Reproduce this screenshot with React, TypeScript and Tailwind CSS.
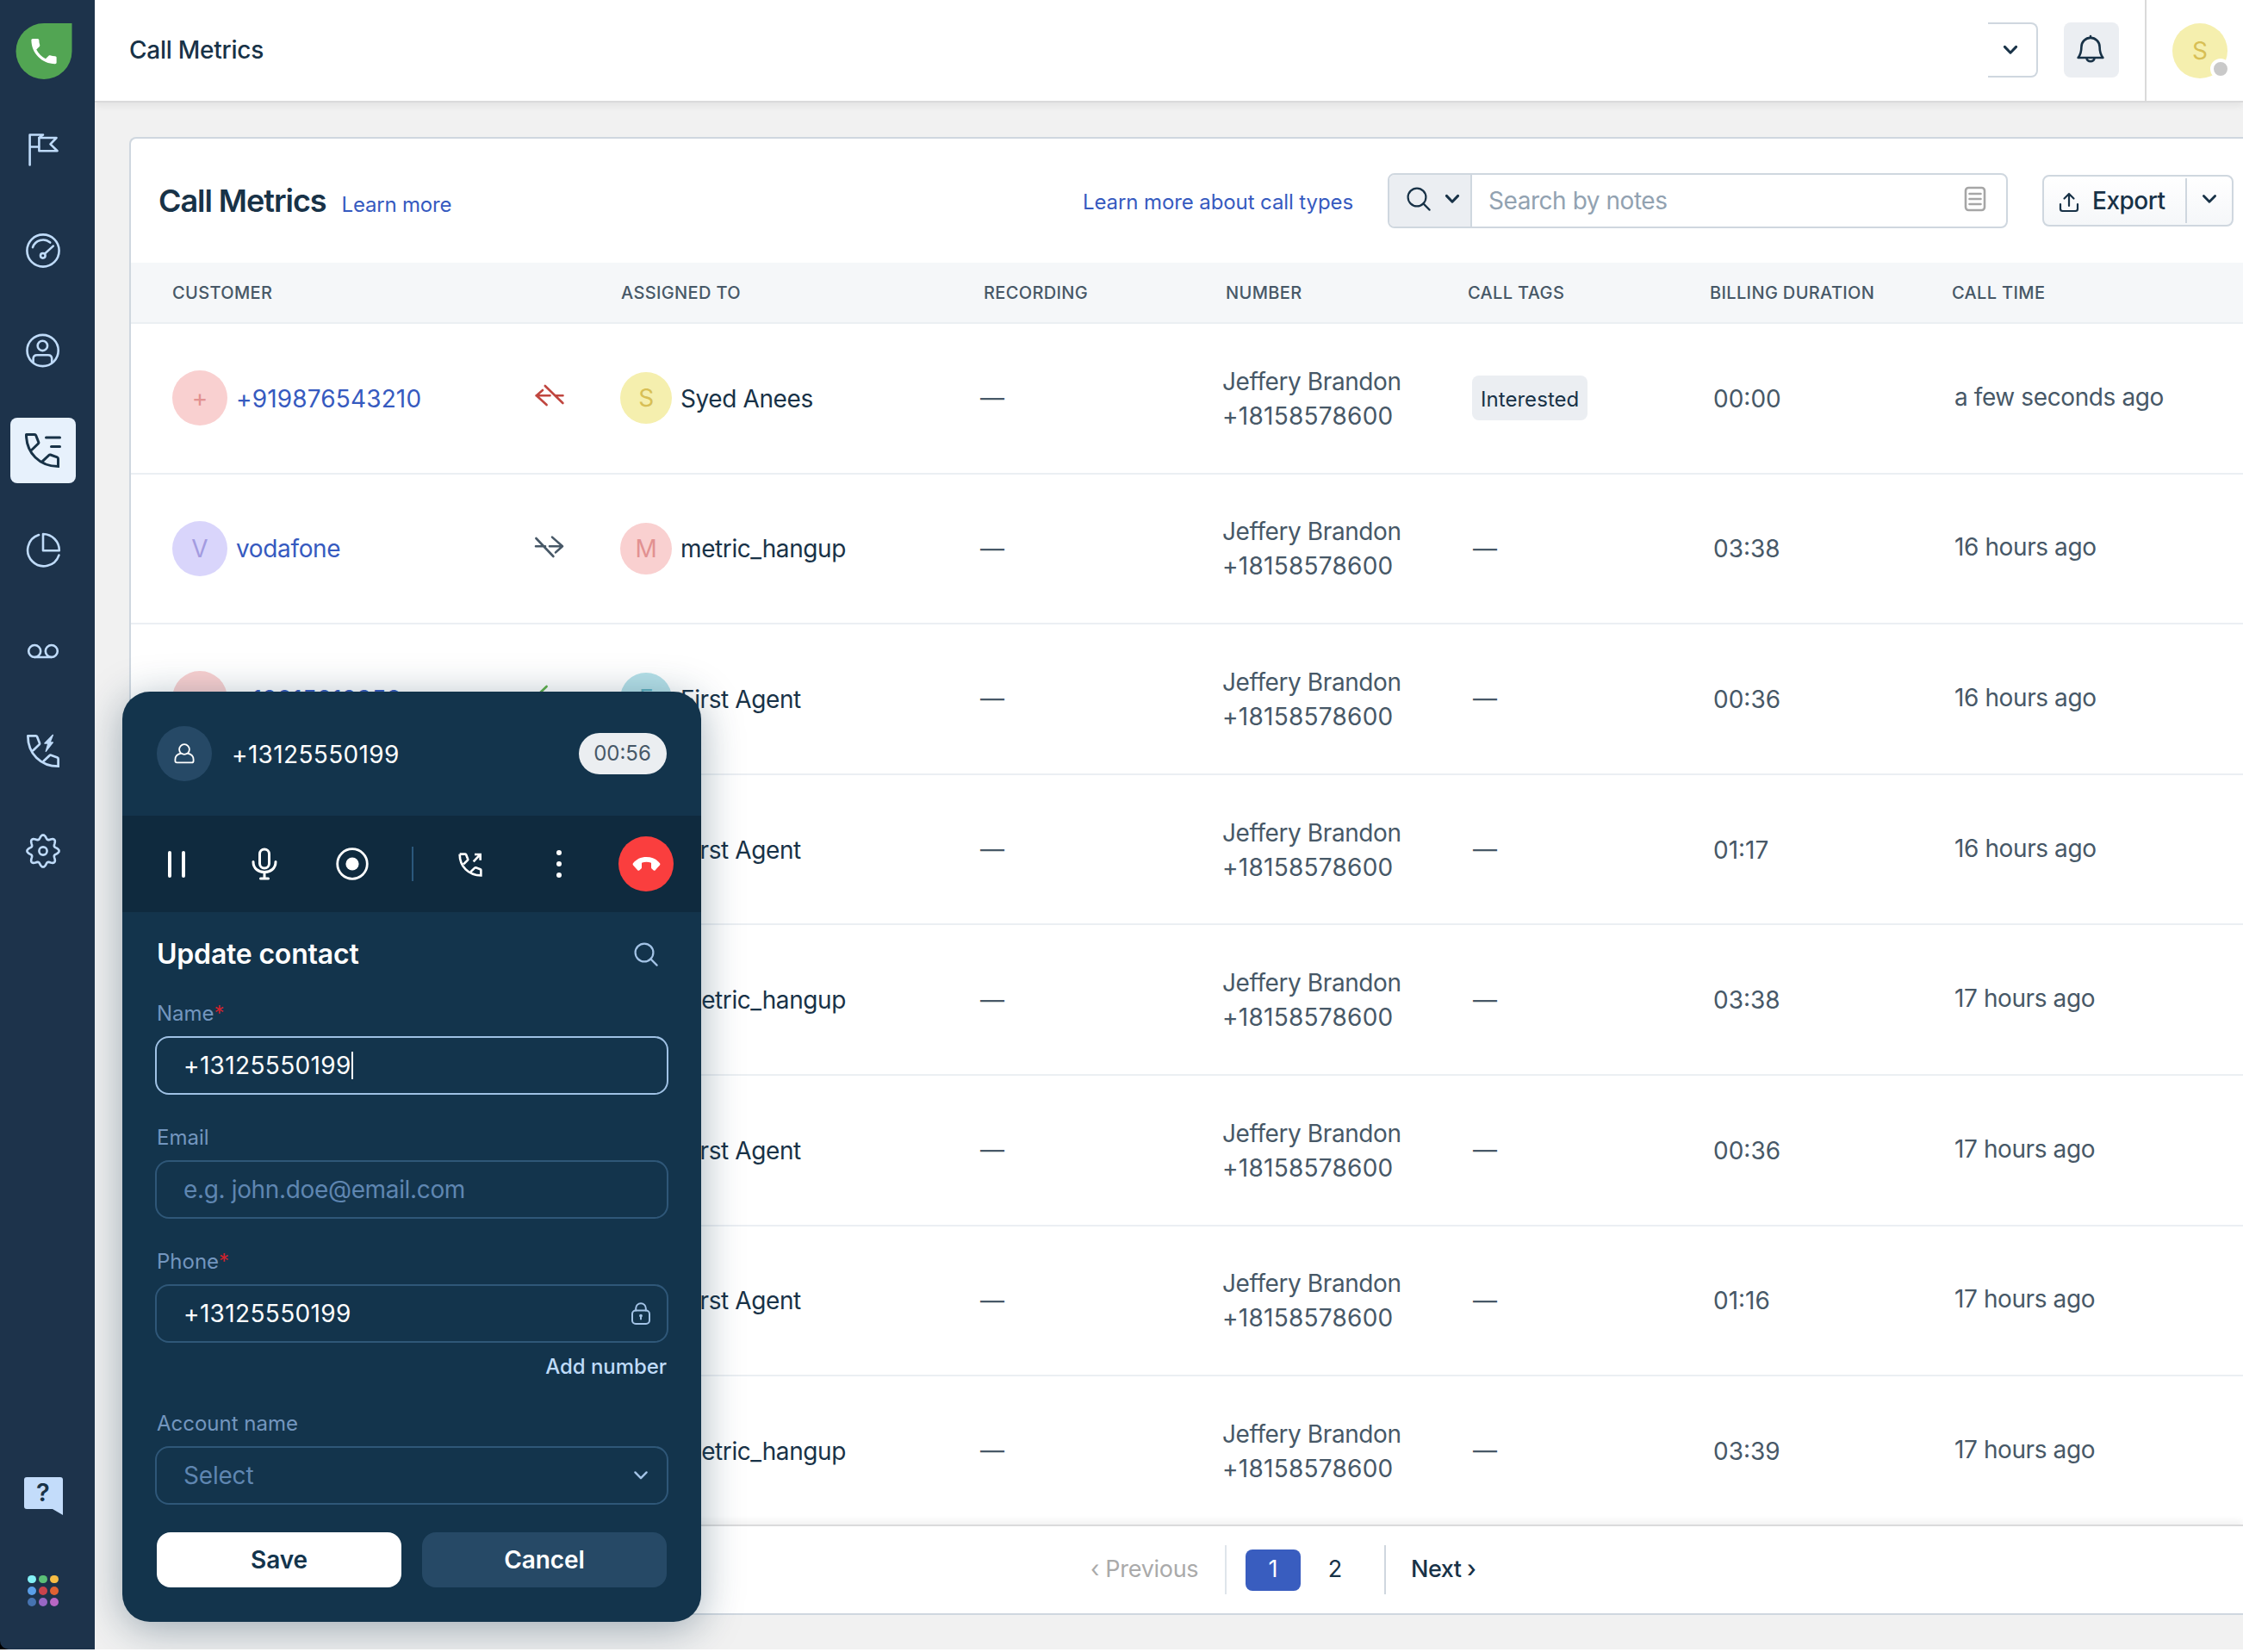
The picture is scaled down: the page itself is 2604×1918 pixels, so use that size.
import type { ReactNode } from "react";
import clsx from "clsx";

type Direction = "missed-in" | "missed-out" | "in";

interface Call {
  customer?: string;
  initial?: string;
  customerColor?: string;
  direction: Direction;
  agent: string;
  agentInitial?: string;
  agentColor: string;
  tag?: string;
  duration: string;
  time: string;
}

const PINK = "bg-[#f9d0d0] text-[#e29191]";
const YELLOW = "bg-[#f5efae] text-[#d8bf55]";
const PURPLE = "bg-[#d9d5fb] text-[#a39be0]";
const TEAL = "bg-[#b5e0e8] text-[#5fb0bf]";

const METRIC = { agent: "metric_hangup", agentColor: PINK };
const FIRST = { agent: "First Agent", agentColor: TEAL };

const calls: Call[] = [
  {
    customer: "+919876543210",
    initial: "+",
    customerColor: PINK,
    direction: "missed-in",
    agent: "Syed Anees",
    agentInitial: "S",
    agentColor: YELLOW,
    tag: "Interested",
    duration: "00:00",
    time: "a few seconds ago",
  },
  {
    ...METRIC,
    customer: "vodafone",
    initial: "V",
    customerColor: PURPLE,
    direction: "missed-out",
    agentInitial: "M",
    duration: "03:38",
    time: "16 hours ago",
  },
  {
    ...FIRST,
    customer: "+12015212358",
    initial: "+",
    customerColor: PINK,
    direction: "in",
    agentInitial: "F",
    duration: "00:36",
    time: "16 hours ago",
  },
  { ...FIRST, direction: "in", duration: "01:17", time: "16 hours ago" },
  { ...METRIC, direction: "missed-out", duration: "03:38", time: "17 hours ago" },
  { ...FIRST, direction: "in", duration: "00:36", time: "17 hours ago" },
  { ...FIRST, direction: "in", duration: "01:16", time: "17 hours ago" },
  { ...METRIC, direction: "missed-out", duration: "03:39", time: "17 hours ago" },
];

const COLUMNS = "grid grid-cols-[568px_421px_281px_281px_281px_281px_1fr]";

/* ---------- icons ---------- */

interface IconProps {
  w: number;
  h: number;
  stroke?: number;
  className?: string;
  children: ReactNode;
}

function Icon({ w, h, stroke = 2.6, className, children }: IconProps) {
  return (
    <svg
      width={w}
      height={h}
      viewBox={`0 0 ${w} ${h}`}
      fill="none"
      stroke="currentColor"
      strokeWidth={stroke}
      strokeLinecap="round"
      strokeLinejoin="round"
      className={clsx("shrink-0", className)}
    >
      {children}
    </svg>
  );
}

const HANDSET =
  "M2.5 2.5H12.2Q13.3 2.5 13.7 3.5L16.8 11.4Q17.1 12.3 16.4 13L9.2 20M2.5 2.5C2.5 24 18 39.5 39.5 39.5V30.4Q39.5 29.2 38.4 28.8L30.6 26Q29.6 25.7 28.8 26.5L21.8 33.2";

const FILLED_PHONE =
  "M6.62 10.79c1.44 2.83 3.76 5.14 6.59 6.59l2.2-2.2c.27-.27.67-.36 1.02-.24 1.12.37 2.33.57 3.57.57.55 0 1 .45 1 1V20c0 .55-.45 1-1 1-9.39 0-17-7.61-17-17 0-.55.45-1 1-1h3.5c.55 0 1 .45 1 1 0 1.25.2 2.45.57 3.57.11.35.03.74-.25 1.02l-2.2 2.2z";

const FlagIcon = () => (
  <Icon w={40} h={42}>
    <path d="M4.6 38.5V3.5H20L15.4 7M4.6 17.5H15" />
    <path d="M15.4 7H35.5L28.5 14.4L36.6 22.2H15.4Z" />
  </Icon>
);

const GaugeIcon = () => (
  <Icon w={40} h={40} className="translate-y-px">
    <circle cx="20" cy="20" r="18.6" />
    <path d="M8 16.2A12.6 12.6 0 0 1 28.2 10.6" />
    <circle cx="19.8" cy="25.8" r="2.8" />
    <path d="M22.2 23.4L31.8 14.6" />
  </Icon>
);

const ContactIcon = () => (
  <Icon w={40} h={40}>
    <circle cx="19.6" cy="20" r="18.1" />
    <circle cx="19.4" cy="14.4" r="5.7" />
    <path d="M8.6 33.5V29.6Q8.6 25.2 13 25.2H25.8Q30.2 25.2 30.2 29.6V33.5" />
  </Icon>
);

const CallLogIcon = () => (
  <Icon w={44} h={42} stroke={3}>
    <path d={HANDSET} strokeLinejoin="miter" />
    <path d="M25.5 6H41.5M31.5 16.5H41.5" />
  </Icon>
);

const PieIcon = () => (
  <Icon w={42} h={42}>
    <path d="M16 3A18.6 18.6 0 1 0 39.4 26.6" />
    <path d="M21 2V21.3H39.8A19 19 0 0 0 21 2Z" />
  </Icon>
);

const VoicemailIcon = () => (
  <Icon w={38} h={20}>
    <circle cx="9.2" cy="10" r="7" />
    <circle cx="28.8" cy="10" r="7" />
    <path d="M9.2 17H28.8" />
  </Icon>
);

const PhoneBoltIcon = () => (
  <svg width="40" height="40" viewBox="0 0 42 42" fill="none" stroke="currentColor" strokeWidth="2.9" strokeLinecap="round">
    <path d={HANDSET} />
    <path
      d="M33 1.4L23 11.6H27.2L24.4 21.4L33 10.4H29.4Z"
      fill="currentColor"
      strokeWidth="1.4"
      strokeLinejoin="round"
    />
  </svg>
);

// eight soft lobes around the hub
const gearPath =
  Array.from({ length: 121 }, (_, i) => {
    const angle = (i / 120) * Math.PI * 2;
    const radius = 16.3 + 2.3 * Math.cos(angle * 8);
    const x = 20 + radius * Math.sin(angle);
    const y = 20 - radius * Math.cos(angle);
    return `${i === 0 ? "M" : "L"}${x.toFixed(2)} ${y.toFixed(2)}`;
  }).join("") + "Z";

const GearIcon = () => (
  <Icon w={40} h={40}>
    <path d={gearPath} />
    <circle cx="20" cy="20" r="4.6" />
  </Icon>
);

const Chevron = ({ className, stroke = 3 }: { className?: string; stroke?: number }) => (
  <Icon w={18} h={12} stroke={stroke} className={className}>
    <path d="M2.4 2.4L9 9.2L15.6 2.4" />
  </Icon>
);

const SearchIcon = ({ className }: { className?: string }) => (
  <Icon w={28} h={28} stroke={2.2} className={className}>
    <circle cx="12" cy="12" r="10.4" />
    <path d="M19.4 19.4L26.6 26.6" />
  </Icon>
);

function DirectionIcon({ direction }: { direction: Direction }) {
  if (direction === "missed-in") {
    return (
      <Icon w={36} h={28} className="text-[#c0463f]">
        <path d="M2.5 14.2H18.5M25 14.2H33.5M10 8L2.8 14.2L14.6 25M12.8 3L33.4 23" />
      </Icon>
    );
  }
  if (direction === "missed-out") {
    return (
      <Icon w={36} h={28} className="text-[#475867]">
        <path d="M2 14.3H13M18 14.3H33M21 3.6L33 14.3L25 21.4M2.4 5L22.4 26" />
      </Icon>
    );
  }
  return (
    <Icon w={36} h={28} className="text-[#5fb04a]">
      <path d="M2.5 14.2H33.5M14.6 3L2.8 14.2L14.6 25" />
    </Icon>
  );
}

/* ---------- sidebar ---------- */

const navItems = [
  { name: "setup", icon: <FlagIcon /> },
  { name: "dashboard", icon: <GaugeIcon /> },
  { name: "contacts", icon: <ContactIcon /> },
  { name: "metrics", icon: <CallLogIcon />, active: true },
  { name: "reports", icon: <PieIcon /> },
  { name: "voicemail", icon: <VoicemailIcon /> },
  { name: "power dialer", icon: <PhoneBoltIcon /> },
  { name: "settings", icon: <GearIcon /> },
];

const appDots = [
  "bg-[#83f0f5]",
  "bg-[#5bc077]",
  "bg-[#f7bd44]",
  "bg-[#5a9fe8]",
  "bg-[#c8434c]",
  "bg-[#e06233]",
  "bg-[#4673b0]",
  "bg-[#9767c4]",
  "bg-[#b867c4]",
];

function Sidebar() {
  return (
    <aside className="w-[110px] shrink-0 bg-black z-20">
      <div className="flex flex-col h-full pr-[10px] bg-[#1d334b] rounded-bl-[10px]">
        <div className="flex justify-center pt-[27px] h-[116px]">
          <div className="flex items-center justify-center size-[65px] rounded-full rounded-tr-lg bg-[#52a553] translate-x-[0.5px]">
            <svg width="39" height="39" viewBox="0 0 24 24" fill="white">
              <path d={FILLED_PHONE} />
            </svg>
          </div>
        </div>

        <nav className="flex flex-col">
          {navItems.map((item) => (
            <a key={item.name} aria-label={item.name} className="flex items-center justify-center h-[116.3px]">
              <span
                className={clsx(
                  "flex items-center justify-center size-[76px] rounded-lg",
                  item.active ? "bg-[#e7f1fc] text-[#183247]" : "text-[#bfdbf9]",
                )}
              >
                {item.icon}
              </span>
            </a>
          ))}
        </nav>

        <div className="flex flex-col items-center gap-[70px] mt-auto pb-[50px]">
          <div className="flex flex-col items-center w-[45px]">
            <div className="flex items-center justify-center w-full h-[37px] rounded-t-[3px] rounded-bl-[3px] bg-[#c3dcfa] text-[29px] font-semibold text-[#183247]">
              ?
            </div>
            <svg width="12" height="7" viewBox="0 0 12 7" className="self-end" fill="#c3dcfa">
              <path d="M0 0H12V7Z" />
            </svg>
          </div>
          <div className="grid grid-cols-3 gap-[3.5px]">
            {appDots.map((color) => (
              <span key={color} className={clsx("size-[9.8px] rounded-full", color)} />
            ))}
          </div>
        </div>
      </div>
    </aside>
  );
}

/* ---------- page header ---------- */

function Header() {
  return (
    <header className="flex items-center h-[119px] shrink-0 bg-white border-b-2 border-[#dadadb] shadow-[0_4px_8px_rgba(0,0,0,0.06)] z-10">
      <h1 className="pl-10 pb-0.5 text-[28px] font-medium text-[#183247] tracking-[-0.25px]">Call Metrics</h1>
      <div className="flex items-center self-stretch pb-px ml-auto">
        <div className="flex items-center justify-end w-[58px] h-16 pr-[22px] border-2 border-l-0 border-[#cfd7df] rounded-r-lg text-[#183247]">
          <Chevron className="translate-x-px" />
        </div>
        <button className="flex items-center justify-center size-16 ml-[30px] rounded-lg bg-[#ebeef2] text-[#183247]">
          <Icon w={36} h={36} className="-translate-x-px -translate-y-px">
            <path d="M18 3V5M3.6 28C7.2 23.5 7.4 20 7.4 15.5A10.6 10.6 0 0 1 28.6 15.5C28.6 20 28.8 23.5 32.4 28Z" />
            <path d="M13.4 28.5A4.7 4.7 0 0 0 22.6 28.5" />
          </Icon>
        </button>
        <div className="flex items-center self-stretch -mb-px ml-[30px] pl-[30px] pr-[18px] border-l-2 border-[#dadada]">
          <div className="relative flex items-center justify-center size-16 rounded-full bg-[#f5efae] text-[28px] text-[#d8bf55]">
            S
            <span className="absolute -right-1 -bottom-[1px] size-6 rounded-full border-4 border-white bg-[#c9c9c9]" />
          </div>
        </div>
      </div>
    </header>
  );
}

/* ---------- call table ---------- */

function Toolbar() {
  return (
    <div className="flex items-center h-36 shrink-0 pl-8 text-[#183247]">
      <div className="flex items-baseline gap-[18px]">
        <h2 className="text-[36px] font-semibold tracking-[-1.05px]">Call Metrics</h2>
        <a className="text-[24px] text-[#365abf] tracking-[-0.2px]">Learn more</a>
      </div>
      <div className="flex items-center ml-auto">
        <a className="mr-10 pt-[3px] text-[24px] text-[#365abf] tracking-[-0.1px]">Learn more about call types</a>
        <div className="flex w-[720px] h-16 border-2 border-[#cfd7df] rounded-lg overflow-hidden">
          <div className="flex items-center gap-[16px] w-[96px] pl-5 pb-1 bg-[#ebeef2] border-r-2 border-[#cfd7df]">
            <SearchIcon />
            <Chevron />
          </div>
          <div className="flex items-center justify-between flex-1 pl-[19px] pr-[23px] text-[28px] text-[#92a2b1] tracking-[-0.45px]">
            Search by notes
            <Icon w={26} h={30} className="text-[#a6a6a6] -translate-y-0.5">
              <rect x="2" y="2" width="22" height="26" rx="3.5" />
              <path d="M6.5 9H19.5M6.5 15H19.5M6.5 21H19.5" />
            </Icon>
          </div>
        </div>
        <div className="flex items-center w-[222px] h-[60px] ml-10 mr-[11px] border-2 border-[#cfd7df] rounded-lg bg-linear-to-b from-white to-[#f5f7f9]">
          <div className="flex items-center gap-[15px] w-[166px] h-[52px] pl-[17px] border-r-2 border-[#cfd7df] text-[28px] font-medium tracking-[-0.5px]">
            <Icon w={24} h={24} stroke={2.2} className="translate-y-0.5">
              <path d="M12 16V2M6.5 7.5L12 2L17.5 7.5M2 14V19.5Q2 22 4.5 22H19.5Q22 22 22 19.5V14" />
            </Icon>
            Export
          </div>
          <Chevron className="mx-auto -translate-y-0.5" stroke={2.8} />
        </div>
      </div>
    </div>
  );
}

const headings = ["Customer", "Assigned to", "Recording", "Number", "Call tags", "Billing duration", "Call time"];

function CallRow({ call }: { call: Call }) {
  return (
    <div className={clsx(COLUMNS, "items-center h-[174.6px] shrink-0 border-b-2 border-[#ebeff3]")}>
      <div className="flex items-center pl-12">
        <span className={clsx("flex items-center justify-center size-16 mr-2.5 rounded-full", call.customerColor)}>
          {call.initial}
        </span>
        <span
          className={clsx(
            "flex-1 pt-px text-[#365abf]",
            call.customer === "vodafone" ? "tracking-[-0.35px]" : "tracking-[0.15px]",
          )}
        >
          {call.customer}
        </span>
        <span className="w-[100px] mb-1.5">
          <DirectionIcon direction={call.direction} />
        </span>
      </div>
      <div className="flex items-center text-[#183247] tracking-[-0.4px]">
        <span className={clsx("flex items-center justify-center size-[60px] mr-2.5 rounded-full", call.agentColor)}>
          {call.agentInitial}
        </span>
        <span className="pt-px">{call.agent}</span>
      </div>
      <div className="-ml-[3px]">—</div>
      <div className="leading-10 -ml-[3px] pt-px">
        <div className="tracking-[-0.4px]">Jeffery Brandon</div>
        <div className="tracking-[0.25px]">+18158578600</div>
      </div>
      <div className="pl-[7px]">
        {call.tag ? (
          <span className="inline-flex items-center h-[52px] px-2.5 pt-[3px] rounded-lg bg-[#ebeef2] text-[24px] text-[#183247] tracking-[0.05px] -ml-px">
            {call.tag}
          </span>
        ) : (
          "—"
        )}
      </div>
      <div className="pl-[5px] pt-px">{call.duration}</div>
      <div className="pl-1 pb-[3px] tracking-[-0.4px]">{call.time}</div>
    </div>
  );
}

function Pagination() {
  return (
    <div className="flex items-center h-[103px] shrink-0 pl-[1114px] bg-white border-t-2 border-[#dadadb] shadow-[0_-4px_8px_rgba(0,0,0,0.06)] text-[27px] text-[#183247] z-[1]">
      <span className="w-[156px] text-[#aaaaaa] tracking-[-0.3px]">‹ Previous</span>
      <span className="w-0.5 h-[57px] bg-[#dfe5eb]" />
      <span className="flex items-center justify-center w-16 h-12 ml-[22px] rounded-lg bg-[#395dbf] text-white">1</span>
      <span className="flex items-center justify-center w-16 h-12 ml-2">2</span>
      <span className="w-0.5 h-[57px] ml-[25px] bg-[#cfd7df]" />
      <span className="ml-[29px] font-medium tracking-[-0.5px]">Next ›</span>
    </div>
  );
}

function CallTable() {
  return (
    <section className="flex flex-col h-[1716px] mt-10 ml-10 border-2 border-r-0 border-[#cfd7df] rounded-l-lg bg-white overflow-hidden">
      <Toolbar />
      <div
        className={clsx(
          COLUMNS,
          "items-center h-[71px] shrink-0 bg-[#f5f7f9] border-b-2 border-[#ebeff3] text-[20px] font-medium uppercase text-[#475867] tracking-[0.35px]",
        )}
      >
        {headings.map((heading, i) => (
          <span key={heading} className={clsx("pl-px", i === 0 && "ml-[47px]")}>
            {heading}
          </span>
        ))}
      </div>
      <div className="flex flex-col flex-1 min-h-0 overflow-hidden text-[28px] text-[#475867]">
        {calls.map((call, i) => (
          <CallRow key={i} call={call} />
        ))}
      </div>
      <Pagination />
    </section>
  );
}

/* ---------- call widget ---------- */

function Field({ label, required, children }: { label: string; required?: boolean; children: ReactNode }) {
  return (
    <div className="flex flex-col gap-[7px]">
      <label className="h-10 pl-0.5 leading-[41px] text-[24px] text-[#7396bf]">
        {label}
        {required && <span className="text-[#d0222c]">*</span>}
      </label>
      {children}
    </div>
  );
}

function Input({ focused, children }: { focused?: boolean; children: ReactNode }) {
  return (
    <div
      className={clsx(
        "flex items-center h-[68px] pl-[31px] pr-[19px] border-2 rounded-2xl text-[28px]",
        focused ? "border-[#9fc1e4]" : "border-[#2f5778]",
      )}
    >
      {children}
    </div>
  );
}

function CallControls() {
  return (
    <div className="flex items-center h-28 bg-[#0f2a3e] pl-[53px]">
      <Icon w={20} h={34} stroke={4}>
        <path d="M2 4V31M18 4V31" />
      </Icon>
      <Icon w={32} h={40} stroke={3} className="ml-[76px]">
        <rect x="10.5" y="3" width="11" height="22" rx="5.5" />
        <path d="M3 17.5C3 25.5 9 29.5 16 29.5S29 25.5 29 17.5M16 29.5V37M11.5 37H20.5" />
      </Icon>
      <Icon w={40} h={40} stroke={2.8} className="ml-[66px]">
        <circle cx="20" cy="20" r="17.3" />
        <circle cx="20" cy="20" r="7.6" fill="currentColor" stroke="none" />
      </Icon>
      <span className="w-0.5 h-10 ml-[49px] bg-[#2b587c]" />
      <svg
        width="28"
        height="28"
        viewBox="0 0 42 42"
        fill="none"
        stroke="currentColor"
        strokeWidth="4"
        className="ml-[52px] translate-y-px"
      >
        <path d={HANDSET} />
        <path d="M26.5 15.5L37.5 4M28.5 3H38.5V13" />
      </svg>
      <span className="flex flex-col gap-[7px] ml-[85.5px]">
        <i className="size-1.5 rounded-full bg-white" />
        <i className="size-1.5 rounded-full bg-white" />
        <i className="size-1.5 rounded-full bg-white" />
      </span>
      <span className="flex items-center justify-center size-16 ml-[66.5px] rounded-full bg-[#fa3e3e]">
        <svg width="33" height="18" viewBox="0 0 33 18" fill="white">
          <path d="M16.5 1C10 1 4.6 3.6 1 8.2Q0.2 9.4 1 10.4L6.4 16.4Q7.2 17.2 8.2 16.4L10.4 14.6Q11 14 11 13V7.8Q16.5 5.8 22 7.8V13Q22 14 22.6 14.6L24.8 16.4Q25.8 17.2 26.6 16.4L32 10.4Q32.8 9.4 32 8.2C28.4 3.6 23 1 16.5 1Z" />
        </svg>
      </span>
    </div>
  );
}

function CallWidget() {
  return (
    <div className="absolute left-[142px] top-[803px] w-[672px] h-[1080px] rounded-[32px] bg-[#13344c] text-white overflow-hidden shadow-[0_8px_48px_rgba(18,52,77,0.38)] z-10">
      <div className="flex items-center h-36 px-10">
        <span className="flex items-center justify-center size-16 rounded-full bg-[#264966]">
          <Icon w={24} h={24} stroke={1.8}>
            <path d="M8.2 11.6A5.9 5.9 0 1 1 15.8 11.6C19.6 12.4 22.6 14.6 22.6 18.8V20.4Q22.6 22.4 20.6 22.4H3.4Q1.4 22.4 1.4 20.4V18.8C1.4 14.6 4.4 12.4 8.2 11.6ZM8.2 11.6Q12 14.2 15.8 11.6" />
          </Icon>
        </span>
        <span className="ml-[23px] pt-px text-[28px] tracking-[0.35px]">+13125550199</span>
        <span className="flex items-center justify-center w-[102px] h-12 ml-auto pr-px rounded-full bg-[#ebeef1] text-[24px] text-[#475867]">
          00:56
        </span>
      </div>

      <CallControls />

      <div className="flex flex-col px-[38px]">
        <div className="flex items-center justify-between h-[97px] pl-0.5 pr-3">
          <h3 className="text-[32px] font-semibold tracking-[-0.2px]">Update contact</h3>
          <SearchIcon className="text-[#a3c3e6]" />
        </div>

        <div className="flex flex-col gap-[29px]">
          <Field label="Name" required>
            <Input focused>
              <span className="tracking-[0.35px]">+13125550199</span>
              <span className="w-0.5 h-8 bg-white" />
            </Input>
          </Field>
          <Field label="Email">
            <Input>
              <span className="text-[#5f86b1] tracking-[-0.35px]">e.g. john.doe@email.com</span>
            </Input>
          </Field>
          <Field label="Phone" required>
            <Input>
              <span className="flex-1 tracking-[0.35px]">+13125550199</span>
              <Icon w={22} h={26} stroke={2} className="text-[#a3c3e6]">
                <rect x="1" y="9.5" width="20" height="15.5" rx="4" />
                <path d="M5.2 9.5V7A5.8 5.8 0 0 1 16.8 7V9.5M11 16V19.4" />
                <circle cx="11" cy="15.6" r="0.9" fill="currentColor" />
              </Icon>
            </Input>
          </Field>
        </div>

        <a className="h-10 mt-[7px] mb-[26px] pr-0.5 leading-[41px] text-right text-[24px] font-medium text-[#bfdbf9] tracking-[-0.05px]">
          Add number
        </a>

        <Field label="Account name">
          <Input>
            <span className="flex-1 text-[#5f86b1] tracking-[-0.2px]">Select</span>
            <Chevron className="mr-0.5 text-[#a3c3e6]" stroke={2.4} />
          </Input>
        </Field>

        <div className="flex gap-6 mt-8 px-0.5 text-[28px] font-semibold tracking-[-0.1px]">
          <button className="flex-1 h-16 rounded-2xl bg-white text-[#13344c]">Save</button>
          <button className="flex-1 h-16 rounded-2xl bg-[#264966]">Cancel</button>
        </div>
      </div>
    </div>
  );
}

export default function App() {
  return (
    <div className="h-[1918px] bg-white pb-[3px] font-[Inter,'Liberation_Sans',sans-serif] overflow-hidden">
      <div className="relative flex h-full bg-[#f1f1f1] overflow-hidden">
        <Sidebar />
        <main className="flex flex-col flex-1 min-w-0">
          <Header />
          <CallTable />
        </main>
        <CallWidget />
      </div>
    </div>
  );
}
